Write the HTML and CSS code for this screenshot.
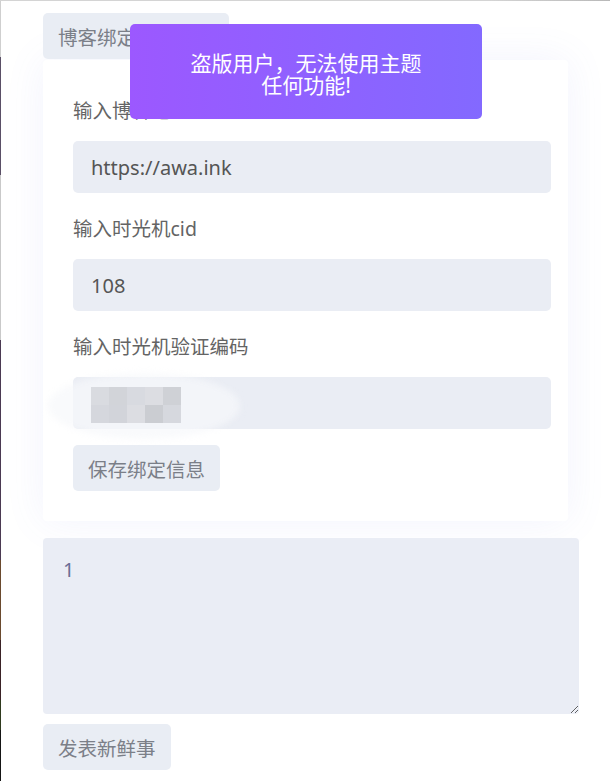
FILE: index.html
```html
<!DOCTYPE html>
<html lang="zh-CN">
<head>
<meta charset="utf-8">
<title>博客绑定</title>
<link rel="stylesheet" href="styles.css">
</head>
<body>
<main class="page">
  <button class="btn">博客绑定信息设置</button>
  <section class="card">
    <label class="label" for="blog">输入博客地址</label>
    <input class="field" id="blog" type="text" value="https://awa.ink">
    <label class="label" for="cid">输入时光机cid</label>
    <input class="field" id="cid" type="text" value="108">
    <label class="label" for="code">输入时光机验证编码</label>
    <div class="field-wrap">
      <input class="field" id="code" type="text" value="">
      <div class="smudge"></div>
      <div class="mosaic">
        <span class="m1"></span><span class="m2"></span><span class="m3"></span><span class="m4"></span><span class="m5"></span>
        <span class="m6"></span><span class="m7"></span><span class="m8"></span><span class="m9"></span><span class="m10"></span>
      </div>
    </div>
    <button class="btn save">保存绑定信息</button>
  </section>
  <textarea class="post">1</textarea>
  <button class="btn publish">发表新鲜事</button>
</main>
<div class="toast">盗版用户，无法使用主题<br>任何功能!</div>
</body>
</html>
```
FILE: styles.css
```css
html {
  background:
    linear-gradient(to right, #d4d4d4, #d4d4d4 80%, #b8b8b8) left top / 100% 1px no-repeat,
    linear-gradient(to bottom, #cfcfcf 0 57px, #5a4f66 57px 175px, #c9c9c9 175px 340px, #4b3a52 340px 560px, #6a4a2e 560px 640px, #3a2226 640px 700px, #2f3a1e 700px 730px, #151515 730px) left top / 1px 100% no-repeat,
    #ffffff;
  min-height: 100%;
}
body {
  margin: 0;
  font-family: "Noto Sans", "Noto Sans CJK SC", sans-serif;
  color: #666;
}
.page {
  padding: 13px 0 0 43px;
  width: 536px;
}
.btn {
  display: inline-flex;
  align-items: center;
  height: 46px;
  padding: 0 15px;
  border: none;
  border-radius: 5px;
  background: #e9edf4;
  color: #7b7f88;
  font-family: "Noto Sans", "Noto Sans CJK SC", sans-serif;
  font-size: 19.5px;
  cursor: pointer;
}
.card {
  margin-top: 1px;
  width: 525px;
  box-sizing: border-box;
  padding: 39px 17px 30px 30px;
  background: #fff;
  border-radius: 4px;
  box-shadow: 0 0 40px rgba(110, 120, 230, 0.09);
  display: flex;
  flex-direction: column;
  align-items: flex-start;
}
.label {
  display: block;
  font-size: 19.5px;
  line-height: 24px;
  color: #646464;
  margin: 24px 0 18px;
}
.label:first-child { margin-top: 0; }
.field-wrap {
  position: relative;
  width: 100%;
}
.field {
  display: block;
  width: 100%;
  height: 52px;
  box-sizing: border-box;
  border: none;
  border-radius: 5px;
  background: #eaedf4;
  padding: 0 18px;
  font-family: "Noto Sans", "Noto Sans CJK SC", sans-serif;
  font-size: 20px;
  color: #555;
  outline: none;
}
.smudge {
  position: absolute;
  left: -25px;
  top: -4px;
  width: 192px;
  height: 66px;
  border-radius: 50%;
  background: rgba(247, 248, 251, 0.7);
  filter: blur(3px);
}
.mosaic {
  position: absolute;
  left: 18px;
  top: 10px;
  display: grid;
  grid-template-columns: repeat(5, 18px);
  grid-template-rows: repeat(2, 18px);
}
.m1 { background: #d9dbe0; }
.m2 { background: #d2d4d9; }
.m3 { background: #d8dae0; }
.m4 { background: #dcdde2; }
.m5 { background: #cfd1d6; }
.m6 { background: #d5d7dd; }
.m7 { background: #d2d4da; }
.m8 { background: #dcdde2; }
.m9 { background: #cbcdd2; }
.m10 { background: #d6d8de; }
.save { margin-top: 16px; }
.post {
  display: block;
  margin-top: 17px;
  width: 536px;
  height: 176px;
  box-sizing: border-box;
  border: none;
  border-radius: 4px;
  background: #eaedf5;
  padding: 18px 20px;
  font-family: "Noto Sans", "Noto Sans CJK SC", sans-serif;
  font-size: 20px;
  color: #6a6d96;
  resize: vertical;
  outline: none;
}
.publish { margin-top: 10px; }
.toast {
  position: fixed;
  left: 130px;
  top: 24px;
  width: 352px;
  height: 95px;
  box-sizing: border-box;
  border-radius: 5px;
  background: linear-gradient(to right, #9c58ff, #8369ff);
  color: #fff;
  font-size: 21px;
  line-height: 22px;
  text-align: center;
  display: flex;
  align-items: center;
  justify-content: center;
  padding-top: 4px;
}
```
